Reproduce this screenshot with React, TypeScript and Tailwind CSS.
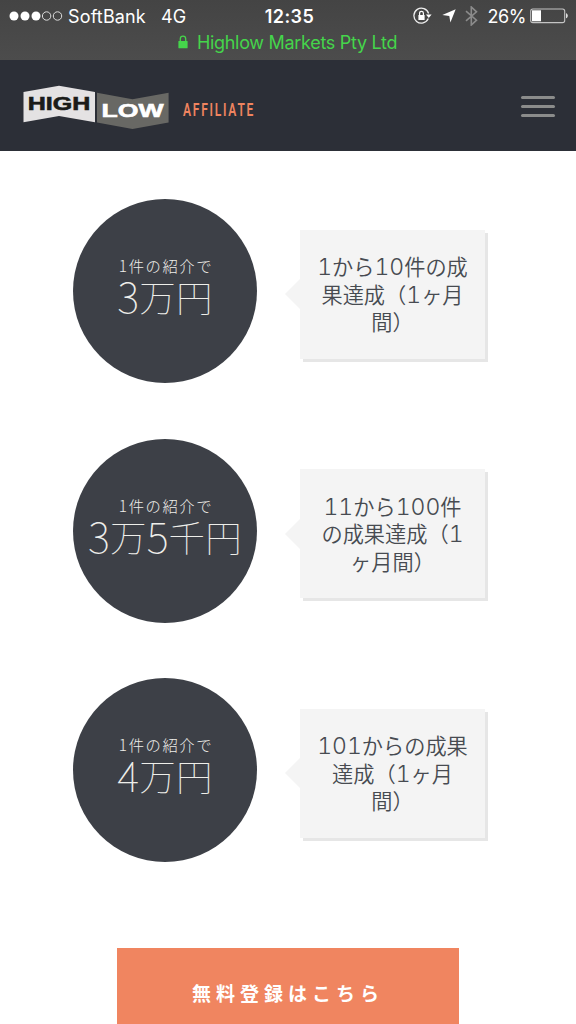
import React from "react";

const JP = "font-['Noto_Sans_CJK_JP','Noto_Sans',sans-serif]";

const tiers = [
  { reward: "3万円", lines: ["1から10件の成", "果達成（1ヶ月", "間）"] },
  { reward: "3万5千円", lines: ["11から100件", "の成果達成（1", "ヶ月間）"] },
  { reward: "4万円", lines: ["101からの成果", "達成（1ヶ月", "間）"] },
];

function Runs({ text, digitClass }: { text: string; digitClass: string }) {
  return (
    <>
      {text.split(/(\d+)/).map((part, i) =>
        /^\d/.test(part) ? (
          <span key={i} className={digitClass}>
            {part}
          </span>
        ) : (
          part
        )
      )}
    </>
  );
}

function StatusBar() {
  return (
    <div className="h-[60px] bg-linear-to-b from-[#444444] to-[#4c4c4c] font-[Inter,sans-serif] text-white">
      <div className="grid h-8 grid-cols-[1fr_auto_1fr] items-center pr-[8px] pl-[9px]">
        <div className="flex items-center">
          <svg width="54" height="12" viewBox="0 0 54 12">
            <circle cx="5" cy="6" r="4.5" fill="#fff" />
            <circle cx="16" cy="6" r="4.5" fill="#fff" />
            <circle cx="27" cy="6" r="4.5" fill="#fff" />
            <circle cx="37.6" cy="6" r="4.2" fill="none" stroke="#ddd" />
            <circle cx="48.5" cy="6" r="4.2" fill="none" stroke="#ddd" />
          </svg>
          <span className="ml-[5px] text-[18px] tracking-[0.15px]">SoftBank</span>
          <span className="ml-[15px] text-[18px] tracking-[0.2px]">4G</span>
        </div>
        <div className="pl-[2px] text-[18px] font-semibold tracking-[0.4px]">12:35</div>
        <div className="flex items-center justify-end">
          <svg width="19" height="18" viewBox="0 0 19 18" fill="none">
            <path d="M15.3 11.6A7.5 7.5 0 1 1 15.6 6.5" stroke="#eee" strokeWidth="1.3" />
            <path d="M13 7.5h5.6L15.8 11z" fill="#fff" />
            <rect x="5.4" y="8" width="6.2" height="5" fill="#fff" />
            <path d="M6.6 8V6.3a1.9 1.9 0 0 1 3.8 0V8" stroke="#fff" strokeWidth="1.2" />
          </svg>
          <svg className="ml-[10px]" width="14" height="14" viewBox="0 0 14 14">
            <path d="M13.7 .3 8.4 13.6 7.3 6.9 .3 5.9z" fill="#fff" />
          </svg>
          <svg className="ml-[9px]" width="13" height="20" viewBox="0 0 13 20" fill="none">
            <path d="m1 5.2 10.5 9L6.3 19V1l5.2 4.8L1 14.8" stroke="#8b8b8b" strokeWidth="1.6" />
          </svg>
          <span className="ml-[9px] text-[18px] tracking-[-0.4px]">26%</span>
          <svg className="ml-[4px]" width="38" height="16" viewBox="0 0 38 16">
            <rect x=".7" y="1" width="34" height="13.6" rx="2.2" fill="none" stroke="#c4c4c4" strokeWidth="1.1" />
            <rect x="2" y="2.3" width="9" height="11" fill="#fff" />
            <path d="M36 5.3c2.4.5 2.4 4.5 0 5z" fill="#ddd" />
          </svg>
        </div>
      </div>
      <div className="flex h-5 items-center justify-center text-[#45d54b]">
        <svg className="mr-[9px] ml-[-1px]" width="10" height="14" viewBox="0 0 10 14">
          <rect x=".4" y="6" width="9.2" height="7.3" rx=".6" fill="currentColor" />
          <path d="M2.3 6.4V3.8a2.7 2.7 0 0 1 5.4 0v2.6" fill="none" stroke="currentColor" strokeWidth="1.3" />
        </svg>
        <span className="text-[18px] tracking-[-0.3px]">Highlow Markets Pty Ltd</span>
      </div>
    </div>
  );
}

function Header() {
  return (
    <header className="flex h-[91px] items-center justify-between bg-[#2c2f37] pr-[21px] pl-[23px]">
      <svg width="234" height="46" viewBox="23 83 234 46" role="img" aria-label="HIGH LOW AFFILIATE">
        <path d="M23.5 92 59 85.7 95 92v30.2L59 116l-35.5 6.2z" fill="#e4e2e3" />
        <path d="M97 92.7 132.5 99.2 168.6 92.7V122.6L132.5 129 97 122.6z" fill="#686864" />
        <text x="27.8" y="110.4" fontSize="18.6" fontWeight="700" textLength="62.5" lengthAdjust="spacingAndGlyphs" fill="#1b1b19" stroke="#1b1b19" strokeWidth=".6" className="font-['Liberation_Sans',sans-serif]">HIGH</text>
        <text x="101.5" y="117.2" fontSize="18.6" fontWeight="700" textLength="62" lengthAdjust="spacingAndGlyphs" fill="#fff" stroke="#fff" strokeWidth=".6" className="font-['Liberation_Sans',sans-serif]">LOW</text>
        <text transform="translate(183 116.3) scale(.64 1)" fontSize="18.8" fontWeight="600" textLength="110" fill="#f0845f" className="font-[Roboto,sans-serif]">AFFILIATE</text>
      </svg>
      <button aria-label="Menu" className="mt-[2px] flex w-[34px] flex-col gap-[6px]">
        <span className="h-[3px] rounded-full bg-[#8b8c8b]" />
        <span className="h-[3px] rounded-full bg-[#8b8c8b]" />
        <span className="h-[3px] rounded-full bg-[#8b8c8b]" />
      </button>
    </header>
  );
}

function Tier({ reward, lines }: { reward: string; lines: string[] }) {
  return (
    <section className="flex h-[184px] items-center pl-[73px]">
      <div className="flex size-[184px] shrink-0 flex-col items-center rounded-full bg-[#3d4047] pt-[55px] whitespace-nowrap text-[#eeeeea]">
        <p className="h-[20px] pl-[2px] text-[15.3px] leading-[22px] font-light tracking-[1.6px]">1件の紹介で</p>
        <p className="h-[44px] text-[36.5px] leading-[44px] font-thin tracking-[0.2px]">
          <Runs text={reward} digitClass="align-[-1px] text-[42px] leading-none tracking-[0px]" />
        </p>
      </div>
      <svg className="mt-[6px] ml-[28px] shrink-0" width="15" height="30" viewBox="0 0 15 30">
        <path d="M15 0v30L0 15z" fill="#f4f4f4" />
      </svg>
      <div className="mb-[-6px] flex h-[129px] w-[185px] shrink-0 flex-col items-center bg-[#f4f4f4] pt-[22.5px] text-[21.2px] font-[350] whitespace-nowrap text-[#474b51] shadow-[3px_3px_0_#e6e6e6]">
        {lines.map((line) => (
          <p key={line} className="h-[27.7px] leading-[27.7px]">
            <Runs text={line} digitClass="font-[Inter,sans-serif] text-[23px] font-light leading-none tabular-nums" />
          </p>
        ))}
      </div>
    </section>
  );
}

export default function App() {
  return (
    <div className={`h-[1024px] w-[576px] overflow-hidden bg-white ${JP}`}>
      <StatusBar />
      <Header />
      <main className="flex flex-col gap-[55.5px] pt-[48px]">
        {tiers.map((t) => (
          <Tier key={t.reward} {...t} />
        ))}
        <button className="mt-[30px] ml-[117px] h-[92px] w-[342px] bg-[#f08560] text-[19px] font-bold tracking-[5px] text-white">
          無料登録はこちら
        </button>
      </main>
    </div>
  );
}
